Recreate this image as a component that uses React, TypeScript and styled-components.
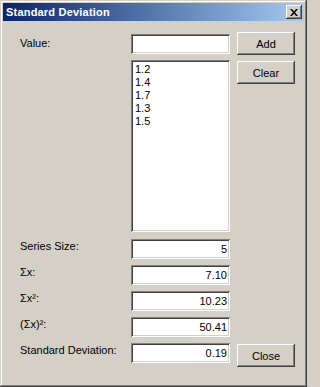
import styled, { createGlobalStyle } from "styled-components";

const GlobalStyle = createGlobalStyle`
  html, body {
    margin: 0;
    padding: 0;
    background: #d4d0c8;
  }
  body {
    font-family: "Liberation Sans", Arial, sans-serif;
    font-size: 11px;
    color: #000;
  }
`;

const raised = `
  box-shadow:
    inset -1px -1px #404040,
    inset 1px 1px #ffffff,
    inset -2px -2px #808080,
    inset 2px 2px #d4d0c8;
`;

const sunken = `
  box-shadow:
    inset 1px 1px #808080,
    inset -1px -1px #ffffff,
    inset 2px 2px #404040,
    inset -2px -2px #d4d0c8;
`;

const Window = styled.div`
  width: 307px;
  height: 387px;
  box-sizing: border-box;
  padding: 3px;
  background: #d4d0c8;
  display: flex;
  flex-direction: column;
  box-shadow:
    inset -1px -1px #404040,
    inset 1px 1px #d4d0c8,
    inset -2px -2px #808080,
    inset 2px 2px #ffffff;
`;

const TitleBar = styled.div`
  height: 18px;
  flex: none;
  display: flex;
  align-items: center;
  justify-content: space-between;
  padding: 0 2px 0 3px;
  background: linear-gradient(to right, #0a246a, #a6caf0);
`;

const Title = styled.span`
  color: #fff;
  font-weight: bold;
  font-size: 11px;
  letter-spacing: 0.2px;
`;

const TitleButton = styled.button`
  width: 16px;
  height: 14px;
  padding: 0;
  border: none;
  background: #d4d0c8;
  display: flex;
  align-items: center;
  justify-content: center;
  ${raised}
`;

const Client = styled.div`
  flex: 1;
  padding: 11px 0 0 17px;
  display: flex;
  flex-direction: column;
`;

const Row = styled.div<{ $top: number }>`
  display: grid;
  grid-template-columns: 104px 99px 58px;
  column-gap: 7px;
  align-items: start;
  margin-top: ${(p) => p.$top}px;
`;

const Label = styled.span<{ $offset?: number }>`
  line-height: 13px;
  padding-top: ${(p) => p.$offset ?? 0}px;
  white-space: nowrap;
`;

const TextBox = styled.div<{ $offset?: number }>`
  height: 20px;
  box-sizing: border-box;
  margin-top: ${(p) => p.$offset ?? 0}px;
  padding: 2px 3px 2px 2px;
  background: #fff;
  text-align: right;
  line-height: 16px;
  ${sunken}
`;

const ListBox = styled.div`
  height: 172px;
  box-sizing: border-box;
  padding: 3px 4px;
  background: #fff;
  ${sunken}
`;

const ListItem = styled.div`
  line-height: 13px;
`;

const Button = styled.button<{ $offset?: number }>`
  width: 58px;
  height: 23px;
  margin-top: ${(p) => p.$offset ?? 0}px;
  padding: 0;
  border: none;
  background: #d4d0c8;
  font-family: "Liberation Sans", Arial, sans-serif;
  font-size: 11px;
  color: #000;
  ${raised}
`;

const values = ["1.2", "1.4", "1.7", "1.3", "1.5"];

const stats = [
  { label: "Series Size:", value: "5" },
  { label: "Σx:", value: "7.10" },
  { label: "Σx²:", value: "10.23" },
  { label: "(Σx)²:", value: "50.41" },
];

function App() {
  return (
    <>
      <GlobalStyle />
      <Window>
        <TitleBar>
          <Title>Standard Deviation</Title>
          <TitleButton aria-label="Close">
            <svg width="8" height="7" viewBox="0 0 8 7">
              <path d="M0 0h2l2 2.5L6 0h2L5 3.5 8 7H6L4 4.5 2 7H0l3-3.5z" fill="#000" />
            </svg>
          </TitleButton>
        </TitleBar>
        <Client>
          <Row $top={0}>
            <Label $offset={5}>Value:</Label>
            <TextBox $offset={2} />
            <Button>Add</Button>
          </Row>
          <Row $top={5}>
            <span />
            <ListBox>
              {values.map((v) => (
                <ListItem key={v}>{v}</ListItem>
              ))}
            </ListBox>
            <Button $offset={1}>Clear</Button>
          </Row>
          {stats.map((s, i) => (
            <Row key={s.label} $top={i === 0 ? 7 : 6}>
              <Label $offset={1}>{s.label}</Label>
              <TextBox>{s.value}</TextBox>
            </Row>
          ))}
          <Row $top={6}>
            <Label $offset={1}>Standard Deviation:</Label>
            <TextBox>0.19</TextBox>
            <Button $offset={1}>Close</Button>
          </Row>
        </Client>
      </Window>
    </>
  );
}

export default App;
